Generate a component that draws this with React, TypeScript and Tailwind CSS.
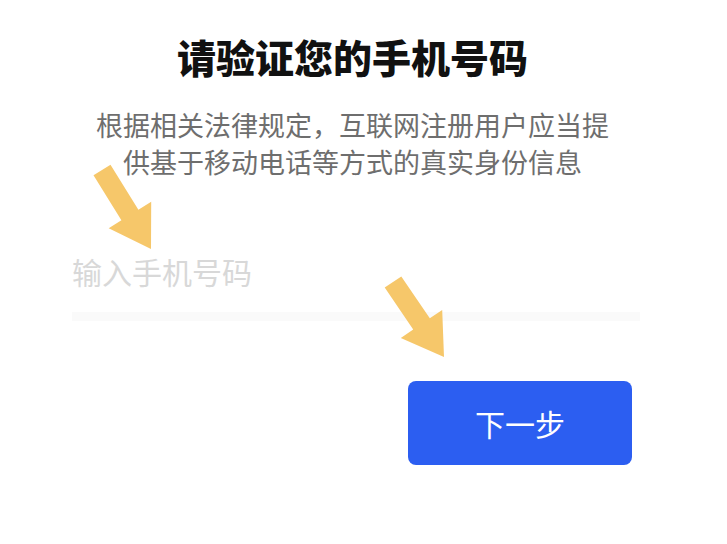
import React from "react";

function arrowPoints(sx: number, sy: number, tx: number, ty: number) {
  const dx = tx - sx;
  const dy = ty - sy;
  const L = Math.sqrt(dx * dx + dy * dy);
  const ux = dx / L;
  const uy = dy / L;
  const nx = -uy;
  const ny = ux;
  const sw = 10;
  const hw = 25;
  const hb = L - 40;
  const p = (a: number, b: number) =>
    `${(sx + ux * a + nx * b).toFixed(1)},${(sy + uy * a + ny * b).toFixed(1)}`;
  return [p(0, -sw), p(hb, -sw), p(hb, -hw), p(L, 0), p(hb, hw), p(hb, sw), p(0, sw)].join(" ");
}

export default function App() {
  return (
    <div
      className="relative w-[727px] h-[544px] overflow-hidden bg-white"
      style={{ fontFamily: '"Noto Sans CJK SC", "Noto Sans", sans-serif' }}
    >
      <div className="flex flex-col pl-[72px] pr-[87px]">
        <div className="mr-[7px] flex flex-col">
          <h1 className="pt-[37px] text-center text-[39px] leading-[39px] font-black text-[#111111]">
            请验证您的手机号码
          </h1>
          <p className="mt-[30px] text-center text-[27px] leading-[37px] text-[#6e6e6e]">
            根据相关法律规定，互联网注册用户应当提
            <br />
            供基于移动电话等方式的真实身份信息
          </p>
        </div>
        <div className="mt-[76px] text-[30px] leading-[30px] text-[#d8d8d8]">输入手机号码</div>
        <div className="mt-[26px] h-[9px] bg-[#fafafa]" />
        <div className="mt-[60px] flex justify-end pr-[8px]">
          <button className="flex h-[84px] w-[224px] items-center justify-center rounded-[8px] bg-[#2c5ef1] text-[30px] text-white">
            下一步
          </button>
        </div>
      </div>
      <svg
        className="pointer-events-none absolute left-0 top-0"
        width="727"
        height="544"
        viewBox="0 0 727 544"
      >
        <polygon points={arrowPoints(102, 170, 151, 249)} fill="#f5c25d" opacity="0.92" />
        <polygon points={arrowPoints(393, 282, 444, 357)} fill="#f5c25d" opacity="0.92" />
      </svg>
    </div>
  );
}
